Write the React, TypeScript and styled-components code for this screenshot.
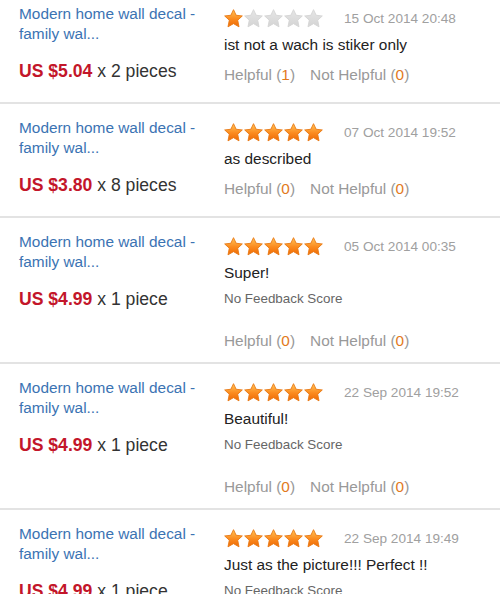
import React from "react";
import styled, { createGlobalStyle } from "styled-components";

const Global = createGlobalStyle`
  html, body { margin: 0; padding: 0; background: #fff; }
  body { font-family: "Liberation Sans", Arial, sans-serif; overflow: hidden; }
`;

const List = styled.div`
  margin-top: -10px;
`;

const Row = styled.div`
  display: flex;
  padding: 14px 0 11px 19px;
  border-bottom: 2px solid #e3e3e3;
`;

const Left = styled.div`
  width: 205px;
  flex: none;
  padding-bottom: 10px;
`;

const Title = styled.a`
  display: block;
  font-size: 15.4px;
  line-height: 20px;
  color: #3b73b3;
  text-decoration: none;
  width: 192px;
`;

const Price = styled.div`
  margin-top: 17px;
  font-size: 17.6px;
  line-height: 20px;
  color: #333;
  white-space: nowrap;
`;

const Amount = styled.span`
  color: #c3162a;
  font-weight: bold;
`;

const Right = styled.div`
  flex: 1;
  display: flex;
  flex-direction: column;
`;

const Head = styled.div`
  margin-top: 5px;
  height: 18px;
  display: flex;
  align-items: center;
`;

const Stars = styled.div`
  display: flex;
  gap: 1px;
`;

const Date = styled.span`
  margin-left: 21px;
  font-size: 13.6px;
  color: #a0a0a0;
  margin-top: 1px;
`;

const Comment = styled.div`
  margin-top: 8px;
  font-size: 15.4px;
  line-height: 20px;
  color: #222;
`;

const Feedback = styled.div`
  margin-top: 8px;
  font-size: 13.4px;
  line-height: 16px;
  color: #666;
`;

const Helpful = styled.div<{ $gap: number }>`
  margin-top: ${(p) => p.$gap}px;
  font-size: 15.4px;
  line-height: 20px;
  color: #999;
  display: flex;
  gap: 15px;
`;

const Num = styled.span`
  color: #e27a1c;
`;

const Star = ({ on, id }: { on: boolean; id: string }) => (
  <svg width="19" height="19" viewBox="0 0 20 20">
    <defs>
      <linearGradient id={id} x1="0" y1="0" x2="0" y2="1">
        {on ? (
          <>
            <stop offset="0" stopColor="#ffc45a" />
            <stop offset="0.55" stopColor="#fb8a1e" />
            <stop offset="1" stopColor="#ee6a05" />
          </>
        ) : (
          <>
            <stop offset="0" stopColor="#e6e6e6" />
            <stop offset="1" stopColor="#d4d4d4" />
          </>
        )}
      </linearGradient>
    </defs>
    <path
      d="M10 0.7 L12.8 6.6 L19.3 7.3 L14.45 11.75 L15.8 18.8 L10 15.4 L4.2 18.8 L5.55 11.75 L0.7 7.3 L7.2 6.6 Z"
      fill={`url(#${id})`}
      stroke={on ? "#e7760e" : "#d4d4d4"}
      strokeWidth="0.9"
      strokeLinejoin="round"
    />
  </svg>
);

type Review = {
  price: string;
  qty: string;
  rating: number;
  date: string;
  comment: string;
  feedback: boolean;
  helpful: number;
  notHelpful: number;
};

const reviews: Review[] = [
  { price: "US $5.04", qty: "x 2 pieces", rating: 1, date: "15 Oct 2014 20:48", comment: "ist not a wach is stiker only", feedback: false, helpful: 1, notHelpful: 0 },
  { price: "US $3.80", qty: "x 8 pieces", rating: 5, date: "07 Oct 2014 19:52", comment: "as described", feedback: false, helpful: 0, notHelpful: 0 },
  { price: "US $4.99", qty: "x 1 piece", rating: 5, date: "05 Oct 2014 00:35", comment: "Super!", feedback: true, helpful: 0, notHelpful: 0 },
  { price: "US $4.99", qty: "x 1 piece", rating: 5, date: "22 Sep 2014 19:52", comment: "Beautiful!", feedback: true, helpful: 0, notHelpful: 0 },
  { price: "US $4.99", qty: "x 1 piece", rating: 5, date: "22 Sep 2014 19:49", comment: "Just as the picture!!! Perfect !!", feedback: true, helpful: 0, notHelpful: 0 },
];

export default function App() {
  return (
    <>
      <Global />
      <List>
        {reviews.map((r, i) => (
          <Row key={i}>
            <Left>
              <Title href="#">Modern home wall decal - family wal...</Title>
              <Price>
                <Amount>{r.price}</Amount> {r.qty}
              </Price>
            </Left>
            <Right>
              <Head>
                <Stars>
                  {[0, 1, 2, 3, 4].map((s) => (
                    <Star key={s} on={s < r.rating} id={`g${i}-${s}`} />
                  ))}
                </Stars>
                <Date>{r.date}</Date>
              </Head>
              <Comment>{r.comment}</Comment>
              {r.feedback && <Feedback>No Feedback Score</Feedback>}
              <Helpful $gap={r.feedback ? 24 : 10}>
                <span>
                  Helpful (<Num>{r.helpful}</Num>)
                </span>
                <span>
                  Not Helpful (<Num>{r.notHelpful}</Num>)
                </span>
              </Helpful>
            </Right>
          </Row>
        ))}
      </List>
    </>
  );
}
